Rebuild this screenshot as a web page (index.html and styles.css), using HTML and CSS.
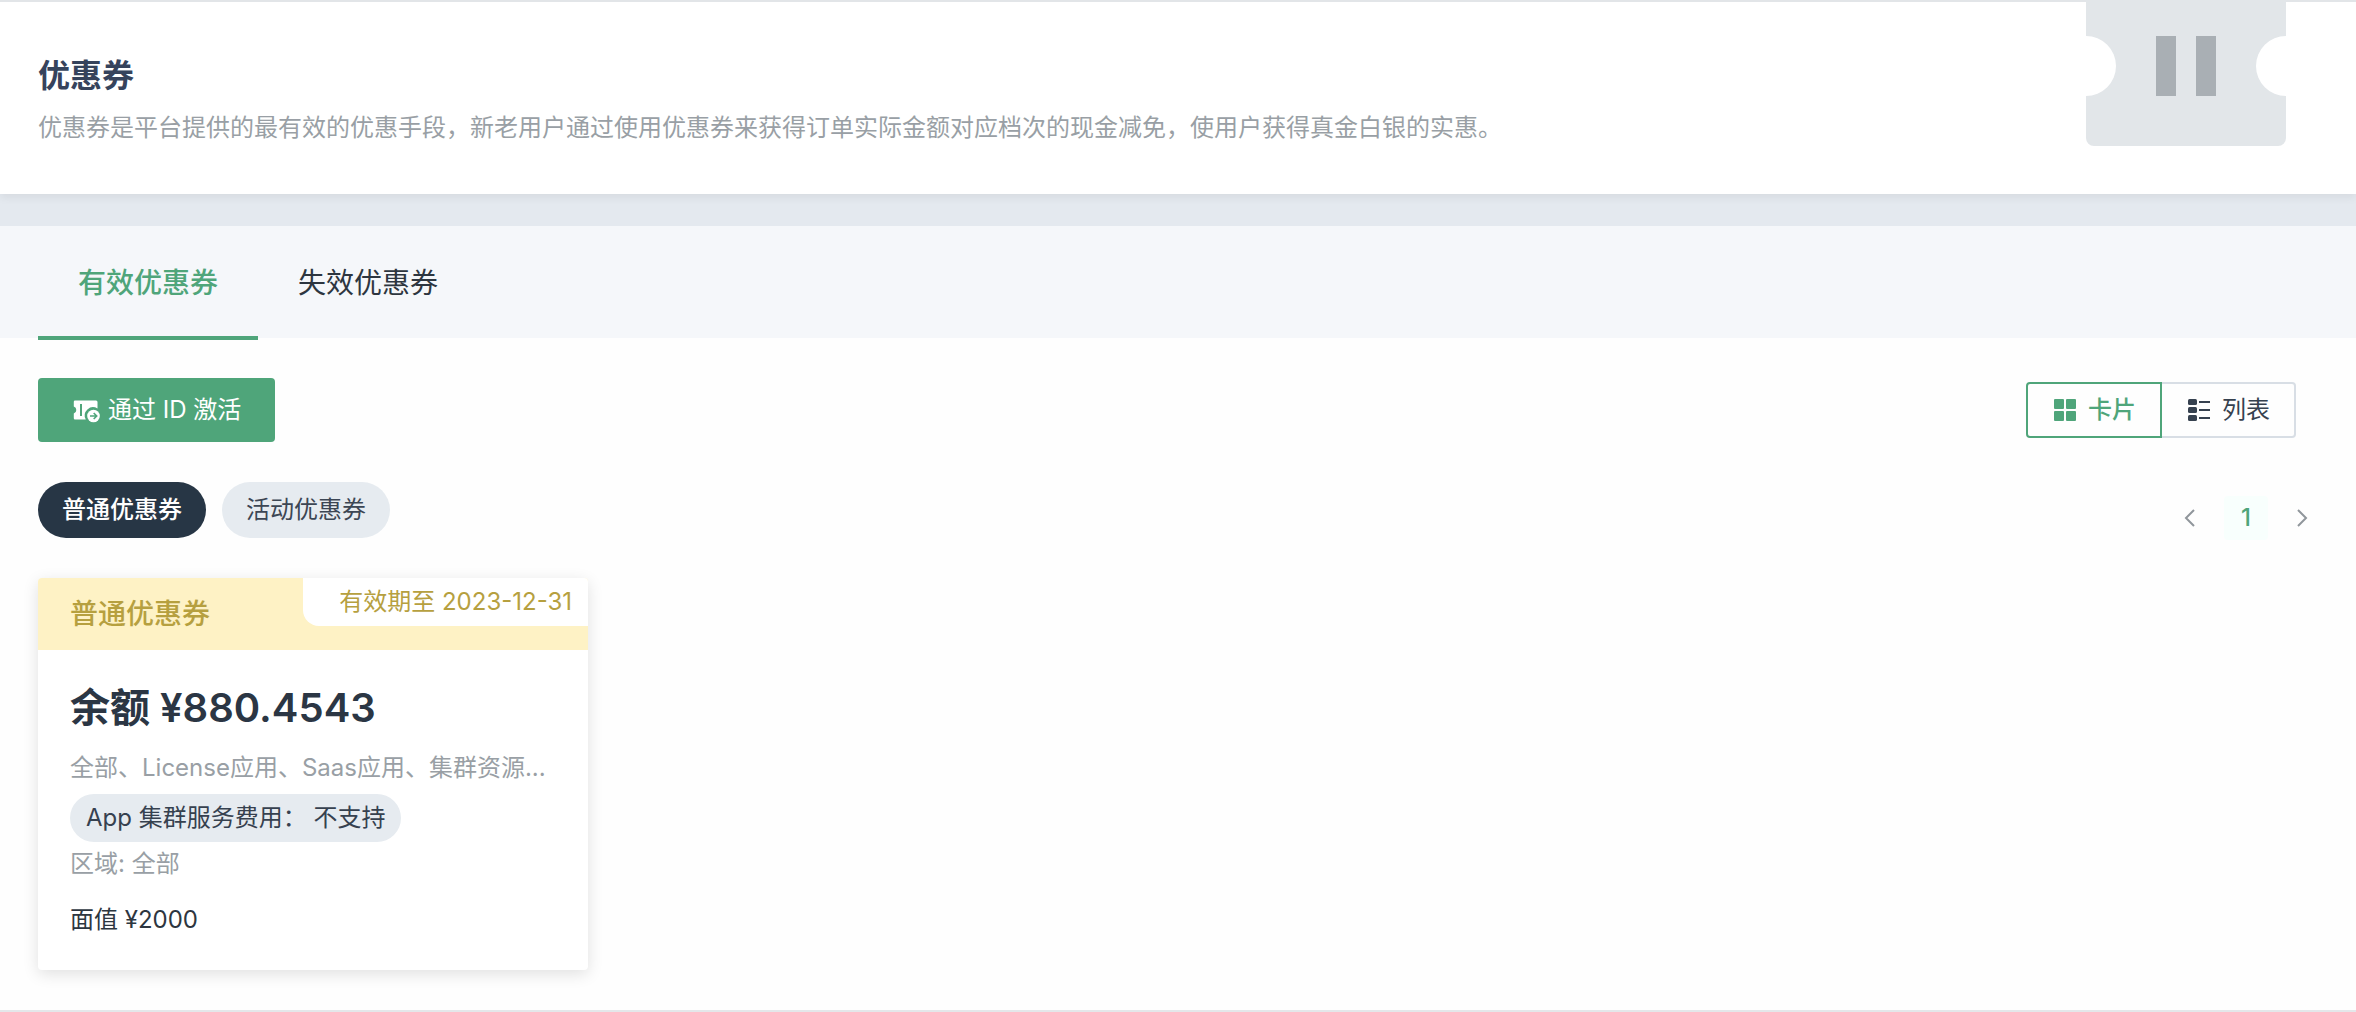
FILE: index.html
```html
<!DOCTYPE html>
<html lang="zh-CN">
<head>
  <meta charset="UTF-8" />
  <meta name="viewport" content="width=device-width, initial-scale=1" />
  <title>优惠券</title>
  <link rel="stylesheet" href="styles.css">
</head>
<body>
  <header class="page-header">
    <div class="page-intro">
      <h1>优惠券</h1>
      <p>优惠券是平台提供的最有效的优惠手段，新老用户通过使用优惠券来获得订单实际金额对应档次的现金减免，使用户获得真金白银的实惠。</p>
    </div>
    <svg class="ticket" viewBox="0 0 200 160" aria-hidden="true">
      <path fill="#e2e6e9" d="M8 0H192A8 8 0 0 1 200 8V50A30 30 0 0 0 200 110V152A8 8 0 0 1 192 160H8A8 8 0 0 1 0 152V110A30 30 0 0 0 0 50V8A8 8 0 0 1 8 0Z"/>
      <path fill="#a9afb4" d="M70 50h20v60H70zM110 50h20v60h-20z"/>
    </svg>
  </header>

  <nav class="tabs">
    <a class="tab active" href="#valid">有效优惠券</a>
    <a class="tab" href="#expired">失效优惠券</a>
  </nav>

  <main class="content">
    <div class="toolbar">
      <button class="btn-activate" type="button">
        <svg width="28" height="28" viewBox="0 0 28 28" aria-hidden="true">
          <path fill="#fff" fill-rule="evenodd" d="M3 4.500h21A1.500 1.500 0 0 1 25.500 6V12.500A8.300 8.300 0 0 0 13.800 23.500H3A1.200 1.200 0 0 1 1.800 22.300V17.500A3.700 3.700 0 0 0 1.800 10.500V5.700A1.200 1.200 0 0 1 3 4.500ZM8 8v12h2V8Z"/>
          <circle cx="21.500" cy="20" r="6.300" fill="#fff"/>
          <path fill="none" stroke="#4fa57a" stroke-width="1.600" d="M18 20h6.500M21.700 17l3 3-3 3"/>
        </svg>
        <span>通过 ID 激活</span>
      </button>
      <div class="view-switch">
        <button class="view-btn active" type="button">
          <svg width="22" height="22" viewBox="0 0 22 22" fill="currentColor" aria-hidden="true">
            <rect width="10" height="10" rx="1"/>
            <rect x="12" width="10" height="10" rx="1"/>
            <rect y="12" width="10" height="10" rx="1"/>
            <rect x="12" y="12" width="10" height="10" rx="1"/>
          </svg>
          <span>卡片</span>
        </button>
        <button class="view-btn" type="button">
          <svg width="22" height="22" viewBox="0 0 22 22" fill="currentColor" aria-hidden="true">
            <rect width="9" height="6" rx="1.500"/>
            <rect y="8" width="9" height="6" rx="1.500"/>
            <rect y="16" width="9" height="6" rx="1.500"/>
            <path d="M11 2h11v2H11zM11 10h11v2H11zM11 18h11v2H11z"/>
          </svg>
          <span>列表</span>
        </button>
      </div>
    </div>

    <div class="filters">
      <div class="chips">
        <button class="chip active" type="button">普通优惠券</button>
        <button class="chip" type="button">活动优惠券</button>
      </div>
      <div class="pagination">
        <button class="page-btn" type="button" aria-label="上一页">
          <svg width="12" height="20" viewBox="0 0 12 20" aria-hidden="true"><path d="M10 2L2 10l8 8"/></svg>
        </button>
        <button class="page-btn current" type="button">1</button>
        <button class="page-btn" type="button" aria-label="下一页">
          <svg width="12" height="20" viewBox="0 0 12 20" aria-hidden="true"><path d="M2 2l8 8-8 8"/></svg>
        </button>
      </div>
    </div>

    <div class="cards">
      <article class="card">
        <div class="card-head">
          <h2>普通优惠券</h2>
          <span class="expiry">有效期至 2023-12-31</span>
        </div>
        <div class="card-body">
          <p class="balance">余额 ¥880.4543</p>
          <p class="scope">全部、License应用、Saas应用、集群资源...</p>
          <span class="tag">App 集群服务费用： 不支持</span>
          <p class="region">区域: 全部</p>
          <p class="face-value">面值 ¥2000</p>
        </div>
      </article>
    </div>
  </main>
</body>
</html>
```
FILE: styles.css
```css
* {
  box-sizing: border-box;
}

body {
  margin: 0;
  font-family: Inter, "Noto Sans CJK SC", sans-serif;
  font-size: 24px;
  line-height: 36px;
  color: #2d3640;
  background: #fefefe;
}

h1, h2, p {
  margin: 0;
}

button {
  font: inherit;
  color: inherit;
  border: none;
  background: none;
  padding: 0;
  cursor: pointer;
}

svg {
  display: block;
}

/* Header */
.page-header {
  position: relative;
  display: flex;
  justify-content: space-between;
  height: 194px;
  padding: 0 70px 0 38px;
  border-top: 2px solid #e2e5e8;
  background: #fff;
  box-shadow: 0 4px 8px rgba(0, 0, 0, 0.06);
}

.page-intro {
  padding-top: 50px;
}

.page-intro h1 {
  font-size: 32px;
  font-weight: 600;
  line-height: 48px;
  color: #36435c;
}

.page-intro p {
  margin-top: 10px;
  color: #999fa5;
}

.ticket {
  width: 200px;
  height: 160px;
  margin-top: -16px;
}

/* Tabs */
.tabs {
  display: flex;
  height: 144px;
  padding: 0 38px;
  border-top: 32px solid #e4e9ef;
  background: #f5f7fa;
}

.tab {
  height: 114px;
  padding: 0 40px;
  border-bottom: 4px solid transparent;
  font-size: 28px;
  line-height: 114px;
  color: #2d3640;
  text-decoration: none;
}

.tab.active {
  color: #4fa57a;
  border-color: #4fa57a;
  font-weight: 500;
}

/* Toolbar */
.content {
  padding: 40px 60px 40px 38px;
  border-bottom: 2px solid #e4e7ea;
}

.toolbar {
  display: flex;
  align-items: center;
  justify-content: space-between;
}

.btn-activate {
  display: flex;
  align-items: center;
  gap: 8px;
  height: 64px;
  padding: 0 34px;
  border-radius: 4px;
  background: #4fa57a;
  color: #fff;
}

.view-switch {
  display: flex;
}

.view-btn {
  display: flex;
  align-items: center;
  gap: 12px;
  height: 56px;
  padding: 0 24px 0 26px;
  border: 2px solid #d8dee5;
  border-left: none;
  border-radius: 0 4px 4px 0;
  color: #36414f;
}

.view-btn.active {
  border: 2px solid #4fa57a;
  border-radius: 4px 0 0 4px;
  color: #4fa57a;
  font-weight: 500;
}

/* Filters */
.filters {
  display: flex;
  justify-content: space-between;
  margin-top: 40px;
}

.chips {
  display: flex;
  gap: 16px;
}

.chip {
  height: 56px;
  padding: 0 24px;
  border-radius: 28px;
  background: #e6ebf0;
  color: #3c4654;
}

.chip.active {
  background: #273645;
  color: #fff;
  font-weight: 500;
}

.pagination {
  display: flex;
  gap: 12px;
  margin-right: -28px;
  padding-top: 14px;
}

.page-btn {
  display: flex;
  align-items: center;
  justify-content: center;
  width: 44px;
  height: 44px;
  border-radius: 4px;
}

.page-btn path {
  fill: none;
  stroke: #90969b;
  stroke-width: 2;
}

.page-btn.current {
  background: #f8fffd;
  color: #4fa57a;
  font-weight: 500;
}

/* Coupon cards */
.cards {
  display: flex;
  flex-wrap: wrap;
  gap: 32px;
  margin-top: 38px;
}

.card {
  width: 550px;
  border-radius: 4px;
  overflow: hidden;
  background: #fff;
  box-shadow: 0 4px 16px rgba(0, 0, 0, 0.12);
}

.card-head {
  display: flex;
  align-items: flex-start;
  justify-content: space-between;
  height: 72px;
  padding-left: 32px;
  background: #fef2c5;
  color: #b6a03f;
}

.card-head h2 {
  font-size: 28px;
  font-weight: 500;
  line-height: 72px;
}

.expiry {
  padding: 0 16px 0 36px;
  line-height: 48px;
  border-bottom-left-radius: 16px;
  background: #fff;
}

.card-body {
  padding: 32px;
}

.balance {
  font-size: 40px;
  font-weight: 600;
  line-height: 52px;
  color: #2b3644;
}

.scope {
  margin-top: 16px;
  color: #999fa5;
  white-space: nowrap;
  overflow: hidden;
  text-overflow: ellipsis;
}

.tag {
  display: block;
  width: fit-content;
  margin-top: 8px;
  padding: 0 16px;
  border-radius: 24px;
  line-height: 48px;
  background: #e6ebf0;
  color: #36414f;
}

.region {
  margin-top: 4px;
  color: #999fa5;
}

.face-value {
  margin-top: 20px;
}
```
